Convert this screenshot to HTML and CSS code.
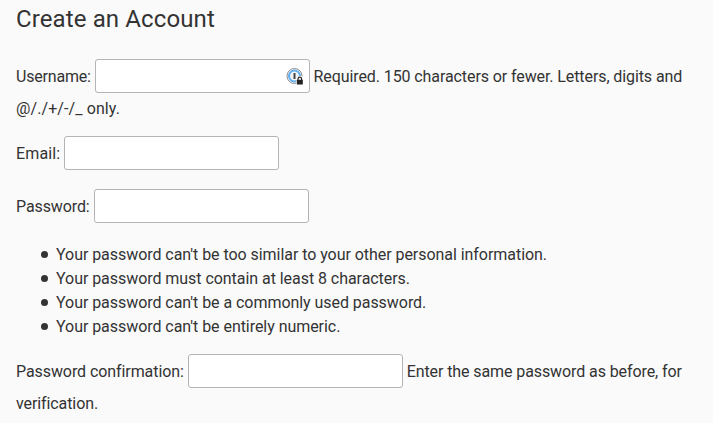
FILE: index.html
```html
<!DOCTYPE html>
<html lang="en">
<head>
<meta charset="utf-8">
<title>Create an Account</title>
<link rel="stylesheet" href="styles.css">
</head>
<body>
<h1>Create an Account</h1>
<form>
<p class="row username"><label for="u">Username:</label> <span class="field"><input id="u" type="text"><svg class="key" width="18" height="18" viewBox="0 0 18 18"><circle cx="8.5" cy="8" r="7.5" fill="#fff" stroke="#8b8b8b" stroke-width="1"/><circle cx="8.5" cy="8" r="5.5" fill="#f4f4f4" stroke="#62aef0" stroke-width="2"/><path d="M8.5 5v6" stroke="#444" stroke-width="2"/><path d="M10 10.5 12 8h4l2 3v7h-8z" fill="#fff"/><path d="M12 12v-1a1.8 1.8 0 0 1 3.6 0v1" fill="none" stroke="#222" stroke-width="1.2"/><rect x="10.8" y="11.8" width="6" height="4.6" rx=".5" fill="#222"/></svg></span> <span class="help">Required. 150 characters or fewer. Letters, digits and <span class="symbols">@/./+/-/_ only.</span></span></p>
<p class="row email"><label for="e">Email:</label> <input id="e" type="email"></p>
<p class="row password"><label for="p">Password:</label> <input id="p" type="password"></p>
<ul>
<li>Your password can't be too similar to your other personal information.</li>
<li>Your password must contain at least 8 characters.</li>
<li>Your password can't be a commonly used password.</li>
<li>Your password can't be entirely numeric.</li>
</ul>
<p class="row confirm"><label for="c">Password confirmation:</label> <input id="c" type="password"> <span class="help">Enter the same password as before, for verification.</span></p>
</form>
</body>
</html>
```
FILE: styles.css
```css
* { box-sizing: border-box; }
html { overflow: hidden; }
body { margin: 0; padding: 0 16px; background: #fafafa; color: #333; font: 16px/24px Roboto, sans-serif; }
h1 { margin: 0; padding-top: 3px; font-size: 24px; font-weight: 400; line-height: 32px; letter-spacing: 0.12px; }
form { padding-top: 24px; }
.row { margin: 0 0 19px; line-height: 32px; }
.username { margin-bottom: 11px; }
.username label { letter-spacing: -0.2px; }
.email label { letter-spacing: 0.15px; }
.password { margin-bottom: 20px; }
.password label { letter-spacing: -0.1px; }
.confirm label { letter-spacing: -0.08px; }
.help { letter-spacing: -0.095px; }
.symbols { letter-spacing: 0.1px; }
input { width: 215px; height: 34px; padding: 4px 8px; border: 1px solid #b4b4b4; border-radius: 3px; background: #fff; color: #333; font: inherit; line-height: 24px; vertical-align: baseline; }
.field { position: relative; display: inline-block; vertical-align: baseline; }
.field input { display: block; }
.key { position: absolute; right: 6px; top: 9px; }
ul { margin: 0 0 15px; padding-left: 40px; list-style: none; letter-spacing: -0.05px; }
li { position: relative; }
li::before { content: ""; position: absolute; left: -15px; top: 8px; width: 7px; height: 7px; border-radius: 50%; background: #333; }
```
